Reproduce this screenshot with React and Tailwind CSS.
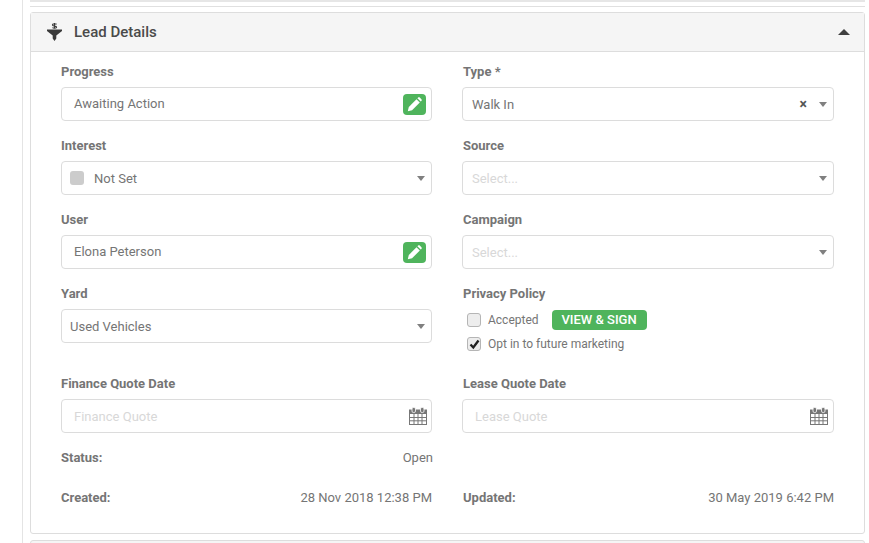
function Label({ right, children }) {
  return <div className={`h-[16px] leading-[16px] text-[13px] font-bold text-[#757575] mb-[7px] ${right ? 'pl-[1px]' : ''}`}>{children}</div>;
}

function Box({ children }) {
  return <div className="h-[34px] border border-[#dcdcdc] rounded-[4px] bg-white flex items-center text-[13px] text-[#757575]">{children}</div>;
}

function Caret() {
  return <span className="w-0 h-0 border-x-[4px] border-x-transparent border-t-[5px] border-t-[#808080]" />;
}

function EditBox({ value }) {
  return (
    <Box>
      <span className="pl-[12px] flex-1 -mt-[1px]">{value}</span>
      <span className="w-[23px] h-[21px] mr-[5px] rounded-[4px] bg-[#4fb45c] flex items-center justify-center">
        <svg width="15" height="15" viewBox="0 0 15 15">
          <path d="M0.800 14.200l1-4.300 7.700-7.700 3.300 3.300-7.700 7.700z" fill="#fff" />
          <path d="M10.400 1.300l.7-.7c.5-.5 1.200-.5 1.700 0l1.600 1.600c.5.5.5 1.200 0 1.700l-.7.7z" fill="#fff" />
        </svg>
      </span>
    </Box>
  );
}

function SelectBox({ value, placeholder, clear, inset = 'pl-[9px]', children }) {
  return (
    <Box>
      {children}
      <span className={`flex-1 pt-[1px] ${inset} ${placeholder ? 'text-[#d8d8d8]' : ''}`}>{value || placeholder}</span>
      {clear && <span className="mr-[12px] text-[14px] leading-none text-[#555] font-bold">×</span>}
      <span className="mr-[6px] flex"><Caret /></span>
    </Box>
  );
}

function DateBox({ placeholder, iconGap = 'mr-[5px]' }) {
  return (
    <Box>
      <span className="pl-[12px] flex-1 pt-[1px] text-[#d8d8d8]">{placeholder}</span>
      <svg width="18" height="18" viewBox="0 0 18 18" className={iconGap}>
        <path d="M0 2.500h18V18H0z" fill="#777" />
        <path d="M1 7h16v10H1z" fill="#fff" />
        <path d="M5 7v10M9 7v10M13 7v10M1 10.500h16M1 13.800h16" stroke="#777" strokeWidth="1" />
        <rect x="3" y="0.500" width="3.500" height="5" rx="1.400" fill="#777" stroke="#fff" strokeWidth="0.800" />
        <rect x="11.500" y="0.500" width="3.500" height="5" rx="1.400" fill="#777" stroke="#fff" strokeWidth="0.800" />
      </svg>
    </Box>
  );
}

function Check({ checked }) {
  return (
    <span className="w-[14px] h-[14px] rounded-[3px] border border-[#b5b5b5] bg-[#ededed] flex items-center justify-center shrink-0">
      {checked && (
        <svg width="11" height="11" viewBox="0 0 11 11">
          <path d="M1.500 5.500l2.800 3 5.200-7" fill="none" stroke="#222" strokeWidth="2.300" />
        </svg>
      )}
    </span>
  );
}

export default function App() {
  return (
    <div className="w-[869px] h-[543px] overflow-hidden bg-white flex font-['Roboto',sans-serif]">
      <div className="w-[23px] shrink-0 border-r border-[#e4e4e4]" />
      <div className="w-[835px] ml-[7px] shrink-0">
        <div className="h-[7px] border-b border-[#e0e0e0] bg-white">
          <div className="h-[2px] bg-[#e6e6e6]" />
        </div>
        <div className="mt-[5px] h-[522px] border border-[#dddddd] rounded-[3px] bg-white">
          <div className="h-[39px] bg-[#f5f5f5] border-b border-[#dddddd] flex items-center pl-[16px] pr-[14px]">
            <svg width="15" height="18" viewBox="0 0 15 18" className="mr-[12px]">
              <path d="M0 6.500h15v1.500L9.300 12.500V15.500L7.500 18 5.700 15.500V12.500L0 8z" fill="#3a3a3a" />
              <path d="M7.500 0v5.500M9.600 1.300c-1-.8-4.200-.8-4.200.7 0 1.500 4.200.7 4.200 2.200 0 1.300-3.200 1.200-4.200.4" fill="none" stroke="#3a3a3a" strokeWidth="1.100" />
            </svg>
            <span className="flex-1 text-[15px] font-medium text-[#4a4a4a] pt-[1px]">Lead Details</span>
            <span className="w-0 h-0 border-x-[6px] border-x-transparent border-b-[6px] border-b-[#3f3f3f]" />
          </div>
          <div className="px-[30px] pt-[12px]">
            <div className="grid grid-cols-[371px_372px] gap-x-[30px] gap-y-[17px]">
              <div><Label>Progress</Label><EditBox value="Awaiting Action" /></div>
              <div><Label right>Type *</Label><SelectBox value="Walk In" clear /></div>
              <div>
                <Label>Interest</Label>
                <SelectBox value="Not Set">
                  <span className="ml-[8px] w-[14px] h-[14px] rounded-[3px] bg-[#cccccc] mr-[1px]" />
                </SelectBox>
              </div>
              <div><Label right>Source</Label><SelectBox placeholder="Select..." /></div>
              <div><Label>User</Label><EditBox value="Elona Peterson" /></div>
              <div><Label right>Campaign</Label><SelectBox placeholder="Select..." /></div>
              <div><Label>Yard</Label><SelectBox value="Used Vehicles" inset="pl-[8px]" /></div>
              <div className="h-[66px]">
                <Label right>Privacy Policy</Label>
                <div className="pl-[5px] -mt-[1px] text-[12px] text-[#757575]">
                  <div className="flex items-center h-[24px]">
                    <Check />
                    <span className="ml-[7px]">Accepted</span>
                    <span className="ml-[13px] h-[20px] w-[95px] rounded-[4px] bg-[#4fb45c] text-white text-[13px] font-medium flex items-center justify-center">VIEW &amp; SIGN</span>
                  </div>
                  <div className="flex items-center h-[24px]">
                    <Check checked />
                    <span className="ml-[7px]">Opt in to future marketing</span>
                  </div>
                </div>
              </div>
              <div className="pt-[7px]"><Label>Finance Quote Date</Label><DateBox placeholder="Finance Quote" iconGap="mr-[4px]" /></div>
              <div className="pt-[7px]"><Label right>Lease Quote Date</Label><DateBox placeholder="Lease Quote" /></div>
            </div>
            <div className="grid grid-cols-[372px_371px] gap-x-[30px] mt-[15px] text-[13px] text-[#757575]">
              <div className="flex justify-between h-[40px]"><span className="font-bold">Status:</span><span>Open</span></div>
              <div />
              <div className="flex justify-between"><span className="font-bold">Created:</span><span className="pr-[1px]">28 Nov 2018 12:38 PM</span></div>
              <div className="flex justify-between"><span className="font-bold">Updated:</span><span>30 May 2019 6:42 PM</span></div>
            </div>
          </div>
        </div>
        <div className="mt-[6px] h-[10px] border border-[#dddddd] rounded-t-[3px] bg-[#f5f5f5]" />
      </div>
    </div>
  );
}
